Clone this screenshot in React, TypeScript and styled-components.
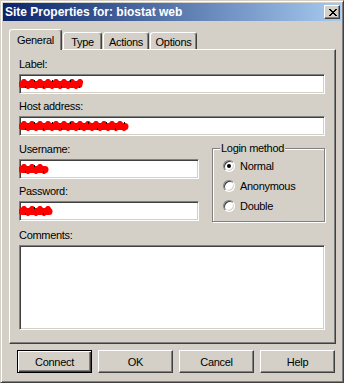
import React from 'react';
import styled, { createGlobalStyle } from 'styled-components';

const face = '#d4d0c8';

const GlobalStyle = createGlobalStyle`
  html, body {
    margin: 0;
    padding: 0;
    background: ${face};
  }
  * {
    box-sizing: border-box;
  }
`;

const tabs = [
  { label: 'General', width: 53 },
  { label: 'Type', width: 39 },
  { label: 'Actions', width: 46 },
  { label: 'Options', width: 47 },
];

const buttons = ['Connect', 'OK', 'Cancel', 'Help'];

const Scribble: React.FC<{ width: number }> = ({ width }) => {
  // red marker over the redacted value
  let d = 'M3 5';
  for (let x = 3; x < width - 3; x += 4) {
    d += ` L${x + 2} ${x % 8 === 3 ? 3 : 7}`;
  }
  return (
    <ScribbleSvg width={width} height={11} viewBox={`0 0 ${width} 11`}>
      <path d={d} fill="none" stroke="#f00" strokeWidth={6} strokeLinejoin="round" strokeLinecap="round" />
      <path d={`M3 5.5 H${width - 4}`} stroke="#f00" strokeWidth={7} strokeLinecap="round" />
      {Array.from({ length: Math.floor(width / 9) }).map((_, i) => (
        <rect key={i} x={6 + i * 9} y={i % 2 ? 1 : 7} width={1} height={2} fill="#000" />
      ))}
    </ScribbleSvg>
  );
};

const Radio: React.FC<{ label: string; checked?: boolean }> = ({ label, checked }) => (
  <RadioRow>
    <RadioDot $checked={checked} />
    {label}
  </RadioRow>
);

const App: React.FC = () => (
  <>
    <GlobalStyle />
    <Window>
      <TitleBar>
        <TitleText>Site Properties for: biostat web</TitleText>
        <CloseButton>
          <svg width="8" height="7" viewBox="0 0 8 7" shapeRendering="crispEdges">
            <path
              d="M0 0h2v1h1v1h2v-1h1v-1h2v1h-1v1h-1v1h-1v1h1v1h1v1h1v1h-2v-1h-1v-1h-2v1h-1v1h-2v-1h1v-1h1v-1h1v-1h-1v-1h-1v-1h-1z"
              fill="#000"
            />
          </svg>
        </CloseButton>
      </TitleBar>
      <Body>
        <TabStrip>
          {tabs.map((t, i) => (
            <Tab key={t.label} $active={i === 0} $width={t.width}>
              {t.label}
            </Tab>
          ))}
        </TabStrip>
        <Panel>
          <Field>
            <FieldLabel>Label:</FieldLabel>
            <Edit>
              <Scribble width={64} />
            </Edit>
          </Field>
          <Field>
            <FieldLabel>Host address:</FieldLabel>
            <Edit>
              <Scribble width={110} />
            </Edit>
          </Field>
          <Row>
            <Column>
              <Field>
                <FieldLabel>Username:</FieldLabel>
                <Edit>
                  <Scribble width={30} />
                </Edit>
              </Field>
              <Field>
                <FieldLabel>Password:</FieldLabel>
                <Edit>
                  <Scribble width={34} />
                </Edit>
              </Field>
            </Column>
            <GroupBox>
              <Legend>Login method</Legend>
              <Radio label="Normal" checked />
              <Radio label="Anonymous" />
              <Radio label="Double" />
            </GroupBox>
          </Row>
          <CommentsField>
            <FieldLabel>Comments:</FieldLabel>
            <Edit $grow />
          </CommentsField>
        </Panel>
        <ButtonRow>
          {buttons.map((b, i) => (
            <Button key={b} $default={i === 0}>
              {b}
            </Button>
          ))}
        </ButtonRow>
      </Body>
    </Window>
  </>
);

const Window = styled.div`
  width: 344px;
  height: 383px;
  display: flex;
  flex-direction: column;
  padding: 2px;
  background: ${face};
  border: 1px solid;
  border-color: ${face} #404040 #404040 ${face};
  box-shadow: inset 1px 1px #fff, inset -1px -1px #808080;
  font-family: 'Liberation Sans', Arial, sans-serif;
  font-size: 11px;
  letter-spacing: -0.3px;
  color: #000;
`;

const TitleBar = styled.div`
  height: 18px;
  flex-shrink: 0;
  display: flex;
  align-items: center;
  justify-content: space-between;
  padding: 0 1px 0 2px;
  background: linear-gradient(90deg, #0a246a, #a6caf0);
`;

const TitleText = styled.span`
  color: #fff;
  font-weight: bold;
  font-size: 12px;
  letter-spacing: 0;
  line-height: 18px;
  white-space: nowrap;
`;

const CloseButton = styled.div`
  width: 16px;
  height: 14px;
  display: flex;
  align-items: center;
  justify-content: center;
  padding: 0 0 0 1px;
  background: ${face};
  border: 1px solid;
  border-color: #fff #404040 #404040 #fff;
  box-shadow: inset -1px -1px #808080;
`;

const Body = styled.div`
  flex: 1;
  display: flex;
  flex-direction: column;
  padding: 8px 5px 7px 6px;
`;

const TabStrip = styled.div`
  height: 20px;
  display: flex;
  align-items: flex-end;
  gap: 1px;
`;

const Tab = styled.div<{ $active?: boolean; $width: number }>`
  position: relative;
  z-index: ${(p) => (p.$active ? 1 : 0)};
  width: ${(p) => p.$width}px;
  height: ${(p) => (p.$active ? 21 : 17)}px;
  margin-bottom: ${(p) => (p.$active ? -1 : 0)}px;
  display: flex;
  align-items: center;
  justify-content: center;
  padding-top: ${(p) => (p.$active ? 0 : 1)}px;
  background: ${face};
  border: 1px solid;
  border-bottom: none;
  border-color: #fff #404040 transparent #fff;
  border-radius: 3px 3px 0 0;
  box-shadow: inset -1px 0 #808080;
  white-space: nowrap;
`;

const Panel = styled.div`
  height: 295px;
  display: flex;
  flex-direction: column;
  gap: 6px;
  padding: 8px 10px 13px 9px;
  border: 1px solid;
  border-color: #fff #404040 #404040 #fff;
  box-shadow: inset -1px -1px #808080;
`;

const Field = styled.div`
  display: flex;
  flex-direction: column;
`;

const CommentsField = styled(Field)`
  flex: 1;
  margin-top: 1px;
`;

const FieldLabel = styled.div`
  line-height: 13px;
  margin-bottom: 3px;
  white-space: nowrap;
`;

const Edit = styled.div<{ $grow?: boolean }>`
  height: ${(p) => (p.$grow ? 'auto' : '20px')};
  flex: ${(p) => (p.$grow ? 1 : 'none')};
  display: flex;
  align-items: center;
  background: #fff;
  border: 1px solid;
  border-color: #808080 #fff #fff #808080;
  box-shadow: inset 1px 1px #404040, inset -1px -1px ${face};
`;

const ScribbleSvg = styled.svg`
  display: block;
  margin-left: -1px;
  margin-top: 1px;
`;

const Row = styled.div`
  display: flex;
  align-items: flex-start;
  margin-top: 1px;
`;

const Column = styled.div`
  width: 180px;
  display: flex;
  flex-direction: column;
  gap: 6px;
`;

const GroupBox = styled.fieldset`
  flex: 1;
  height: 80px;
  margin: -1px 0 0 13px;
  padding: 1px 0 0 10px;
  border: 1px solid #808080;
  box-shadow: inset 1px 1px #fff, 1px 1px #fff;
`;

const Legend = styled.legend`
  padding: 0 1px;
  margin-left: -3px;
  line-height: 13px;
  background: ${face};
`;

const RadioRow = styled.div`
  height: 20px;
  display: flex;
  align-items: center;
  gap: 5px;
  white-space: nowrap;
`;

const RadioDot = styled.span<{ $checked?: boolean }>`
  width: 12px;
  height: 12px;
  flex-shrink: 0;
  display: flex;
  align-items: center;
  justify-content: center;
  border-radius: 50%;
  background: #fff;
  border: 1px solid;
  border-color: #808080 #fff #fff #808080;
  box-shadow: inset 1px 1px #404040, inset -1px -1px ${face};

  &::after {
    content: '';
    width: 4px;
    height: 4px;
    border-radius: 50%;
    background: ${(p) => (p.$checked ? '#000' : 'transparent')};
  }
`;

const ButtonRow = styled.div`
  display: flex;
  justify-content: flex-end;
  gap: 6px;
  margin-top: 6px;
  padding-right: 1px;
`;

const Button = styled.div<{ $default?: boolean }>`
  width: 75px;
  height: 23px;
  display: flex;
  align-items: center;
  justify-content: center;
  background: ${face};
  border: 1px solid;
  border-color: ${(p) => (p.$default ? '#000' : '#fff #404040 #404040 #fff')};
  box-shadow: ${(p) =>
    p.$default
      ? 'inset 1px 1px #fff, inset -1px -1px #404040, inset -2px -2px #808080'
      : 'inset -1px -1px #808080'};
`;

export default App;
